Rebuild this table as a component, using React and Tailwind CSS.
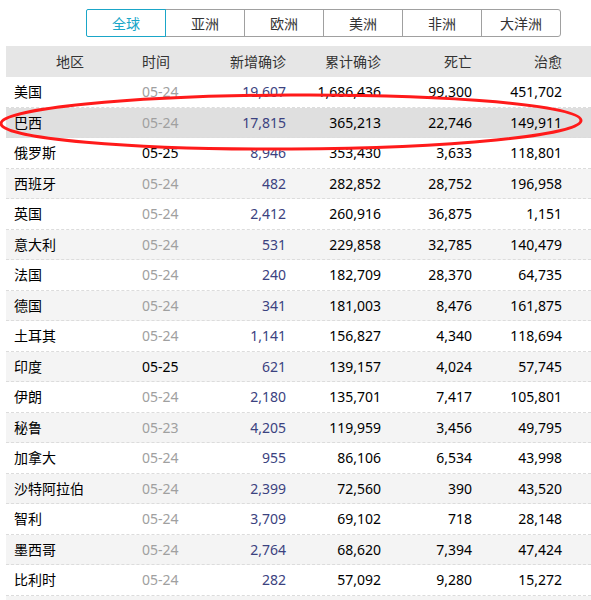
import React from "react";

const tabs = ["全球", "亚洲", "欧洲", "美洲", "非洲", "大洋洲"];

const rows = [
  ["美国", "05-24", "19,607", "1,686,436", "99,300", "451,702"],
  ["巴西", "05-24", "17,815", "365,213", "22,746", "149,911"],
  ["俄罗斯", "05-25", "8,946", "353,430", "3,633", "118,801"],
  ["西班牙", "05-24", "482", "282,852", "28,752", "196,958"],
  ["英国", "05-24", "2,412", "260,916", "36,875", "1,151"],
  ["意大利", "05-24", "531", "229,858", "32,785", "140,479"],
  ["法国", "05-24", "240", "182,709", "28,370", "64,735"],
  ["德国", "05-24", "341", "181,003", "8,476", "161,875"],
  ["土耳其", "05-24", "1,141", "156,827", "4,340", "118,694"],
  ["印度", "05-25", "621", "139,157", "4,024", "57,745"],
  ["伊朗", "05-24", "2,180", "135,701", "7,417", "105,801"],
  ["秘鲁", "05-23", "4,205", "119,959", "3,456", "49,795"],
  ["加拿大", "05-24", "955", "86,106", "6,534", "43,998"],
  ["沙特阿拉伯", "05-24", "2,399", "72,560", "390", "43,520"],
  ["智利", "05-24", "3,709", "69,102", "718", "28,148"],
  ["墨西哥", "05-24", "2,764", "68,620", "7,394", "47,424"],
  ["比利时", "05-24", "282", "57,092", "9,280", "15,272"],
  ["", "", "", "", "", ""],
];

const grid = "grid grid-cols-[128px_80px_80px_95px_91px_90px_1fr]";

export default function App() {
  return (
    <div
      className="relative w-[591px] h-[600px] overflow-hidden bg-white text-[14px] text-[#222]"
      style={{ fontFamily: '"Noto Sans", "Noto Sans CJK SC", sans-serif' }}
    >
      <div className="flex pl-[86px] pt-[9px] h-[46px]">
        {tabs.map((t, i) => (
          <div
            key={t}
            className={
              "w-[80px] h-[28px] flex items-center justify-center border " +
              (i === 0
                ? "border-[#1aa6c8] text-[#1aa6c8] z-10 rounded-l-[2px]"
                : "border-[#a0a0a0] text-[#333] -ml-px") +
              (i === 5 ? " rounded-r-[3px]" : "")
            }
          >
            {t}
          </div>
        ))}
      </div>
      <div className="ml-[6px]">
        <div className={grid + " h-[31px] items-center bg-[#e6e6e6] text-[#333]"}>
          <div className="text-center">地区</div>
          <div className="pl-2">时间</div>
          <div className="text-right pr-2">新增确诊</div>
          <div className="text-right pr-2">累计确诊</div>
          <div className="text-right pr-2">死亡</div>
          <div className="text-right pr-2">治愈</div>
          <div />
        </div>
        {rows.map((r, i) => (
          <div
            key={i}
            className={
              grid +
              " h-[30.5px] items-center border-b border-dashed border-[#dcdcdc] " +
              (i === 1 ? "bg-[#dfdfdf]" : i % 2 === 1 ? "bg-[#f4f4f4]" : "bg-white")
            }
          >
            <div className="pl-2 text-black">{r[0]}</div>
            <div className={"pl-2 " + (r[1] === "05-25" ? "text-black" : "text-[#a0a0a0]")}>{r[1]}</div>
            <div className="text-right pr-2 text-[#3b4280]">{r[2]}</div>
            <div className="text-right pr-2 text-black">{r[3]}</div>
            <div className="text-right pr-2 text-black">{r[4]}</div>
            <div className="text-right pr-2 text-black">{r[5]}</div>
            <div />
          </div>
        ))}
      </div>
      <svg className="absolute left-0 top-0 pointer-events-none" width="591" height="600">
        <ellipse cx="291" cy="122" rx="290" ry="27" fill="none" stroke="#ff1a1a" strokeWidth="3" transform="rotate(-0.3 291 122)" />
      </svg>
    </div>
  );
}
